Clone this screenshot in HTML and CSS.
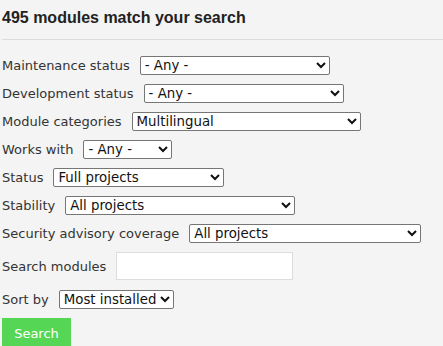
FILE: index.html
```html
<!DOCTYPE html>
<html lang="en">

<head>
    <meta charset="UTF-8">
    <meta name="viewport" content="width=device-width, initial-scale=1.0">
    <title>Module search</title>
    <link rel="stylesheet" href="styles.css">
</head>

<body>
    <div class="page">
        <h2 class="results-title">495 modules match your search</h2>
        <form class="search-form">
            <div class="form-item">
                <label for="maintenance">Maintenance status</label>
                <select id="maintenance" class="select w-maint">
                    <option>- Any -</option>
                </select>
            </div>
            <div class="form-item">
                <label for="development">Development status</label>
                <select id="development" class="select w-dev">
                    <option>- Any -</option>
                </select>
            </div>
            <div class="form-item">
                <label for="categories">Module categories</label>
                <select id="categories" class="select w-cat">
                    <option>Multilingual</option>
                </select>
            </div>
            <div class="form-item">
                <label for="version">Works with</label>
                <select id="version" class="select w-works">
                    <option>- Any -</option>
                </select>
            </div>
            <div class="form-item">
                <label for="status">Status</label>
                <select id="status" class="select w-status">
                    <option>Full projects</option>
                </select>
            </div>
            <div class="form-item">
                <label for="stability">Stability</label>
                <select id="stability" class="select w-stab">
                    <option>All projects</option>
                </select>
            </div>
            <div class="form-item">
                <label for="security">Security advisory coverage</label>
                <select id="security" class="select w-sec">
                    <option>All projects</option>
                </select>
            </div>
            <div class="form-item spaced">
                <label for="text">Search modules</label>
                <input type="text" id="text" class="input-field">
            </div>
            <div class="form-item spaced">
                <label for="sort">Sort by</label>
                <select id="sort" class="select w-sort">
                    <option>Most installed</option>
                </select>
            </div>
            <button type="button" class="button">Search</button>
        </form>
    </div>
</body>

</html>
```

FILE: styles.css
```css
body {
    margin: 0;
    padding: 0;
    background-color: #f4f4f4;
    font-family: "DejaVu Sans", sans-serif;
    font-size: 13px;
    color: #333;
}

.page {
    padding: 0 0 0 2px;
}

.results-title {
    font-family: "Liberation Sans", Arial, sans-serif;
    font-size: 16px;
    font-weight: bold;
    color: #222;
    margin: 0;
    padding: 9px 0 12px;
    line-height: 18px;
    border-bottom: 1px solid #dcdcdc;
}

.search-form {
    padding-top: 11px;
}

.form-item {
    display: flex;
    align-items: center;
    height: 28px;
}

.form-item label {
    margin-right: 10px;
}

.form-item.spaced {
    margin-top: 5px;
}

.select {
    font-family: "DejaVu Sans", sans-serif;
    font-size: 13.33px;
    height: 19px;
    padding: 0;
    background-color: #fff;
    border: 1px solid #767676;
    border-radius: 2px;
    color: #111;
}

.w-maint { width: 190px; }
.w-dev { width: 200px; }
.w-cat { width: 229px; }
.w-works { width: 89px; }
.w-status { width: 171px; }
.w-stab { width: 230px; }
.w-sec { width: 232px; }
.w-sort { width: 115px; }

.input-field {
    width: 177px;
    height: 28px;
    box-sizing: border-box;
    border: 1px solid #ddd;
    background-color: #fff;
    padding: 0 5px;
}

.button {
    margin-top: 5px;
    background-color: #55d655;
    color: #fff;
    border: none;
    width: 69px;
    height: 30px;
    font-family: "DejaVu Sans", sans-serif;
    font-size: 13px;
    padding: 0;
    cursor: pointer;
}
```
